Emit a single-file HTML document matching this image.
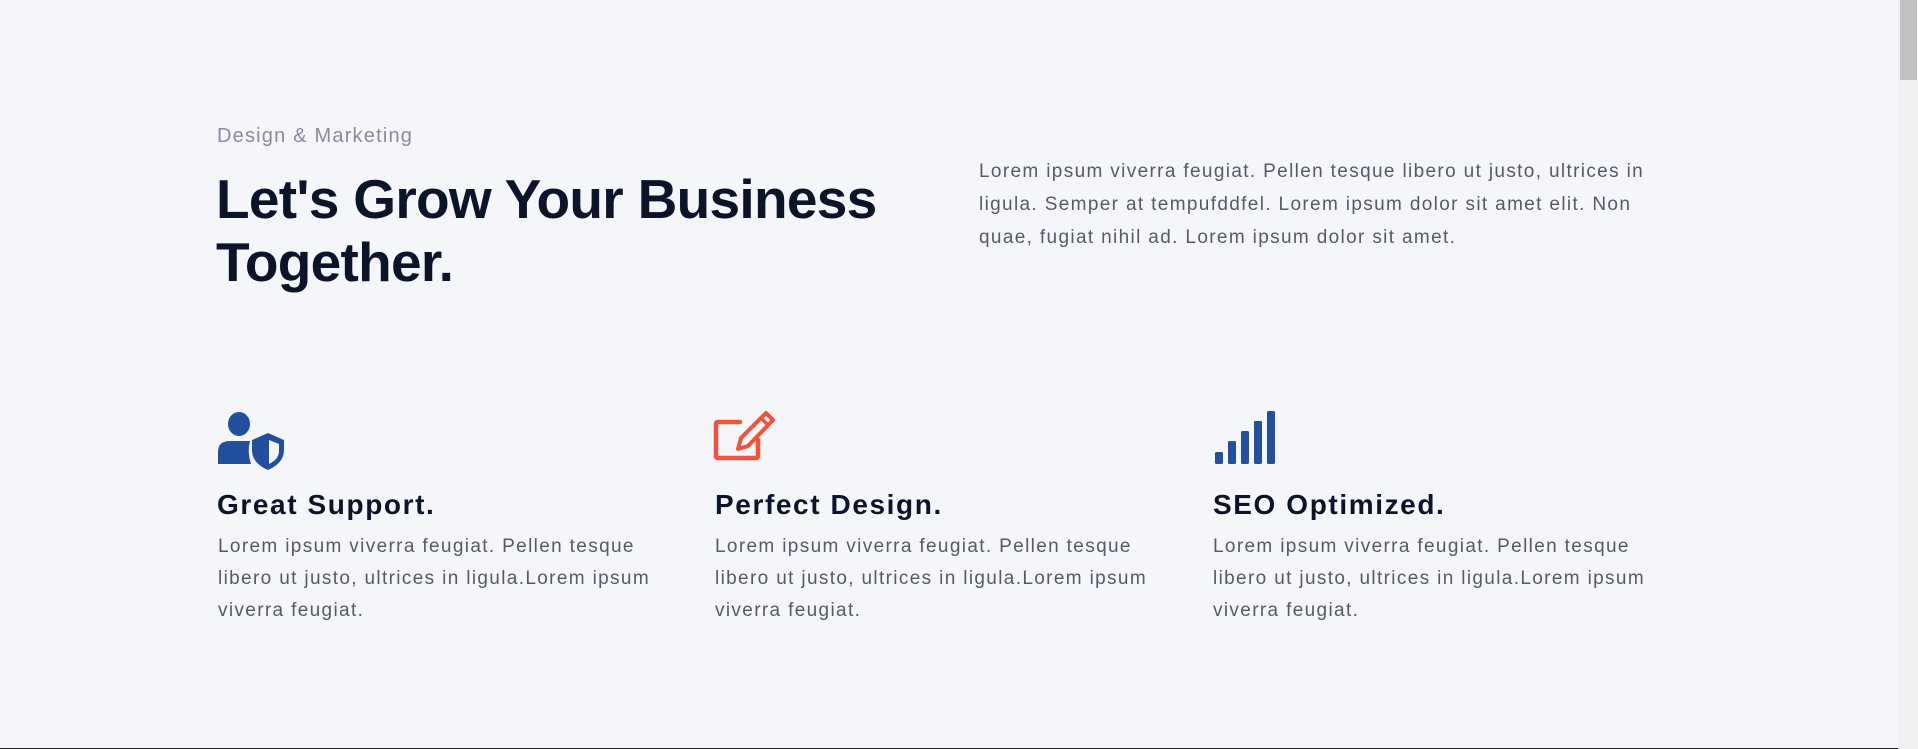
<!DOCTYPE html>
<html><head><meta charset="utf-8"><style>
html,body{margin:0;padding:0;width:1918px;height:749px;overflow:hidden;background:#f5f6fa;font-family:"Liberation Sans",sans-serif;}
.a{position:absolute;white-space:nowrap;}
.sub{left:217px;top:124px;font-size:20px;line-height:24px;color:#8b8a9e;letter-spacing:1.2px;}
.h{left:216px;top:168px;font-size:55px;line-height:63px;font-weight:bold;color:#0b1428;letter-spacing:-0.7px;}
.p{left:979px;top:155px;font-size:19px;line-height:33px;color:#555a66;letter-spacing:1.35px;}
.t{top:488px;font-size:28px;line-height:34px;font-weight:bold;color:#0b1428;letter-spacing:1.6px;}
.b{top:531px;font-size:19px;line-height:32px;color:#555a66;letter-spacing:1.35px;}
.sb{position:absolute;left:1898px;top:0;width:20px;height:749px;background:#f0f0f0;}
.th{position:absolute;left:1900px;top:0;width:17px;height:80px;background:#c1c1c1;}
.bl{position:absolute;left:0;top:748px;width:1898px;height:1px;background:#222;}
</style></head><body>
<div class="a sub">Design &amp; Marketing</div>
<div class="a h">Let's Grow Your Business<br>Together.</div>
<div class="a p">Lorem ipsum viverra feugiat. Pellen tesque libero ut justo, ultrices in<br>ligula. Semper at tempufddfel. Lorem ipsum dolor sit amet elit. Non<br>quae, fugiat nihil ad. Lorem ipsum dolor sit amet.</div>

<svg class="a" style="left:0;top:0" width="1898" height="749">
  <ellipse cx="239" cy="424" rx="11" ry="12" fill="#23509e"/>
  <path d="M218 464 V452 Q218 441 230 441 H250 Q247 452 251 464 Z" fill="#23509e"/>
  <path d="M268 433 L284 440 V450 Q284 463 268 470 Q252 463 252 450 V440 Z" fill="#23509e"/>
  <path d="M269 440 L279 444 V451 Q279 459 269 464 Z" fill="#f5f6fa"/>
  <path d="M740 422 H718 Q716 422 716 424 V456 Q716 458 718 458 H756 Q758 458 758 456 V440" fill="none" stroke="#f4513a" stroke-width="4.5" stroke-linecap="round"/>
  <path d="M766 413 L773 420 L748 446 L738 449 L741 438 Z" fill="none" stroke="#f4513a" stroke-width="4" stroke-linejoin="round"/>
  <path d="M761 418 L768 425" stroke="#f4513a" stroke-width="3.5"/>
  <g fill="#23509e">
    <rect x="1215" y="452" width="8" height="12" rx="1.5"/>
    <rect x="1228" y="441" width="8" height="23" rx="1.5"/>
    <rect x="1241" y="431" width="8" height="33" rx="1.5"/>
    <rect x="1254" y="421" width="8" height="43" rx="1.5"/>
    <rect x="1267" y="411" width="8" height="53" rx="1.5"/>
  </g>
</svg>

<div class="a t" style="left:217px">Great Support.</div>
<div class="a t" style="left:715px">Perfect Design.</div>
<div class="a t" style="left:1213px">SEO Optimized.</div>
<div class="a b" style="left:218px">Lorem ipsum viverra feugiat. Pellen tesque<br>libero ut justo, ultrices in ligula.Lorem ipsum<br>viverra feugiat.</div>
<div class="a b" style="left:715px">Lorem ipsum viverra feugiat. Pellen tesque<br>libero ut justo, ultrices in ligula.Lorem ipsum<br>viverra feugiat.</div>
<div class="a b" style="left:1213px">Lorem ipsum viverra feugiat. Pellen tesque<br>libero ut justo, ultrices in ligula.Lorem ipsum<br>viverra feugiat.</div>

<div class="bl"></div>
<div class="sb"></div><div class="th"></div>
</body></html>
